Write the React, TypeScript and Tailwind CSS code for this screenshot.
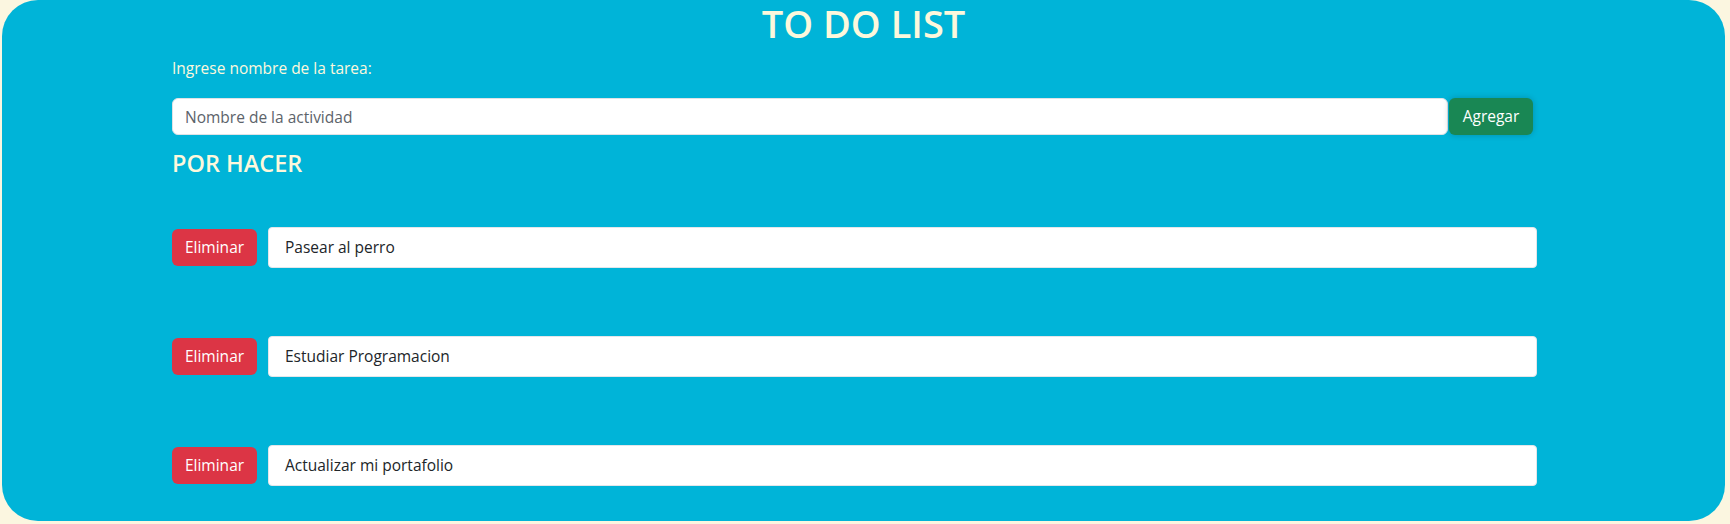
const tareas = ["Pasear al perro", "Estudiar Programacion", "Actualizar mi portafolio"];

const App = () => {
    return (
        <div className="w-[1730px] h-[524px] bg-[#fbf6e0] overflow-hidden" style={{ fontFamily: '"Open Sans", "Noto Sans", sans-serif' }}>
            <div className="ml-[2px] w-[1723px] h-[521px] rounded-[36px] bg-[#00b4d8] pl-[170px]">
                <h1 className="-ml-[170px] pt-[3px] text-center text-[38px] leading-[40px] font-semibold text-[#fdf8dc]">TO DO LIST</h1>
                <p className="mt-[15px] text-[15.5px] leading-[20px] text-[#fdf8dc]">Ingrese nombre de la tarea:</p>
                <div className="mt-[20px] flex items-center">
                    <input
                        className="w-[1276px] h-[37px] rounded-[6px] bg-white border border-[#dee2e6] px-3 text-[15.5px] text-[#212529] placeholder:text-[#5c636a] outline-none"
                        placeholder="Nombre de la actividad"
                    />
                    <button className="ml-[1px] w-[84px] h-[37px] rounded-[6px] bg-[#198754] text-[15.5px] text-white shadow-[0_0_6px_rgba(0,0,0,0.2)]">
                        Agregar
                    </button>
                </div>
                <h2 className="mt-[13px] text-[23.5px] leading-[30px] font-semibold text-[#fdf8dc]">POR HACER</h2>
                <ul className="mt-[49px] flex flex-col gap-[68px]">
                    {tareas.map((t) => (
                        <li key={t} className="flex items-center gap-[11px]">
                            <button className="w-[85px] h-[37px] rounded-[6px] bg-[#dc3545] text-[15.5px] text-white">Eliminar</button>
                            <div className="w-[1269px] h-[41px] rounded-[4px] bg-white border border-[#e3e6ea] pl-[16px] flex items-center text-[15.5px] text-[#212529]">
                                {t}
                            </div>
                        </li>
                    ))}
                </ul>
            </div>
        </div>
    );
};

export default App;
